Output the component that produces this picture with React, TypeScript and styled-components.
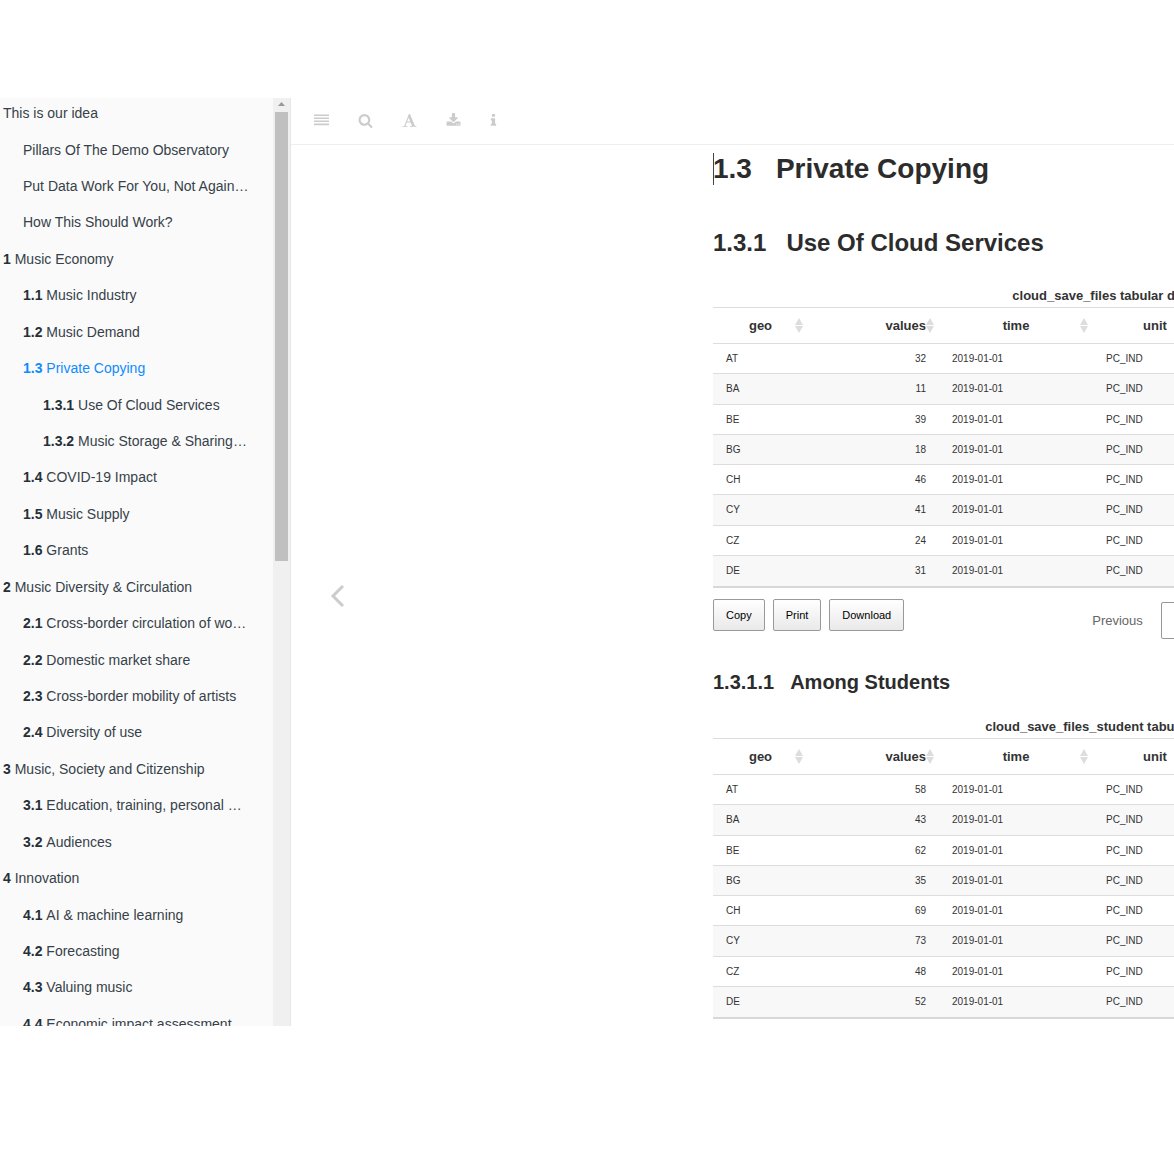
import React from "react";
import styled, { createGlobalStyle } from "styled-components";

const GlobalStyle = createGlobalStyle`
  *, *::before, *::after { box-sizing: border-box; }
  body {
    margin: 0;
    background: #fff;
    color: #333;
    font-family: "Liberation Sans", Arial, sans-serif;
  }
  button { font-family: inherit; }
`;

const Page = styled.div`
  height: 100vh;
  padding: 98px 0 148px;
  overflow: hidden;
`;

const Book = styled.div`
  display: flex;
  height: 100%;
  overflow: hidden;
`;

const Sidebar = styled.aside`
  display: flex;
  flex: 0 0 291px;
  border-right: 1px solid #e7e7e7;
  background: #fafafa;
`;

const Summary = styled.nav`
  flex: 1;
  min-width: 0;
  overflow: hidden;
`;

const ChapterList = styled.ul`
  display: grid;
  grid-auto-rows: 1fr;
  height: 947px;
  margin: -3px 0 0;
  padding: 0;
  list-style: none;
`;

const Chapter = styled.li<{ $level: number }>`
  display: flex;
  align-items: center;
  padding-left: ${({ $level }) => 3 + $level * 20}px;
`;

const ChapterLink = styled.a<{ $active?: boolean }>`
  color: ${({ $active }) => ($active ? "#0f8bff" : "#364149")};
  font-size: 14px;
  line-height: 18px;
  text-decoration: none;
  white-space: nowrap;

  b { color: ${({ $active }) => ($active ? "#0f8bff" : "#263038")}; }
`;

const ScrollTrack = styled.div`
  display: flex;
  flex-direction: column;
  align-items: center;
  flex: 0 0 17px;
  background: #f0f0f0;
`;

const ScrollArrow = styled.svg`
  flex: none;
  width: 9px;
  height: 14px;
`;

const ScrollThumb = styled.div`
  width: 13px;
  height: 449px;
  background: #c0c0c0;
`;

const Body = styled.main`
  display: flex;
  flex-direction: column;
  flex: 1;
  min-width: 0;
`;

const Header = styled.header`
  display: flex;
  flex: none;
  height: 47px;
  padding: 0 0 2px 8px;
  border-bottom: 1px solid #eee;
`;

const ToolButton = styled.button<{ $narrow?: boolean }>`
  display: flex;
  align-items: center;
  justify-content: center;
  width: ${({ $narrow }) => ($narrow ? 36 : 44)}px;
  padding: 0;
  border: 0;
  background: none;
  color: #ccc;

  svg { width: 15px; height: 15px; fill: currentColor; }
`;

const Content = styled.div`
  display: flex;
  flex: 1;
  min-height: 0;
  overflow: hidden;
`;

const PreviousChapter = styled.a`
  display: flex;
  align-items: center;
  justify-content: center;
  flex: 0 0 92px;
  padding-top: 20px;
  color: #ccc;

  svg { width: 14px; height: 24px; }
`;

const Article = styled.article`
  flex: 0 0 780px;
  margin-left: 330px;
  padding-top: 6px;
  color: #333;
`;

const Title = styled.h1`
  position: relative;
  display: flex;
  gap: 24px;
  margin: 0;
  color: #2c2c2c;
  font-size: 28px;
  line-height: 36px;

  &::before {
    content: "";
    position: absolute;
    top: 2px;
    left: 0;
    width: 1px;
    height: 32px;
    background: #444;
  }
`;

const Section = styled.h2`
  display: flex;
  gap: 20px;
  margin: 40px 0 28px;
  color: #2c2c2c;
  font-size: 24px;
  line-height: 32px;
`;

const Subsection = styled.h3`
  display: flex;
  gap: 16px;
  margin: 29px 0 22px;
  color: #2c2c2c;
  font-size: 20px;
  line-height: 28px;
`;

const Figure = styled.figure`
  margin: 0;
`;

const Caption = styled.figcaption`
  margin-bottom: 2px;
  font-size: 13px;
  font-weight: bold;
  line-height: 18px;
  text-align: center;
`;

const DataTable = styled.table`
  width: 504px;
  height: 281px;
  table-layout: fixed;
  border-spacing: 0;
  border-top: 1px solid #ddd;
`;

const HeadCell = styled.th<{ $width: number; $right?: boolean }>`
  position: relative;
  width: ${({ $width }) => $width}px;
  height: 36px;
  padding: ${({ $right }) => ($right ? "0 13px" : "0 18px")};
  border-bottom: 1px solid #ddd;
  font-size: 13px;
  line-height: 18px;
  text-align: ${({ $right }) => ($right ? "right" : "center")};
`;

const SortMark = styled.svg`
  position: absolute;
  top: 10px;
  right: 5px;
  width: 8px;
  height: 15px;
  fill: #ddd;
`;

const Row = styled.tr`
  &:nth-child(even) { background: #f8f8f8; }
  &:last-child td { border-bottom: 2px solid #d8d8d8; }
`;

const Cell = styled.td<{ $right?: boolean }>`
  padding: 1px 13px 0;
  border-bottom: 1px solid #ddd;
  font-size: 10px;
  line-height: 14px;
  text-align: ${({ $right }) => ($right ? "right" : "left")};
`;

const TableFooter = styled.div`
  display: flex;
  gap: 8px;
  height: 40px;
  margin-top: 11px;
`;

const ExportButton = styled.button`
  height: 32px;
  padding: 0 12px;
  border: 1px solid #999;
  border-radius: 2px;
  background: linear-gradient(#fff, #e9e9e9);
  color: #000;
  font-size: 11px;
`;

const Pager = styled.div`
  display: flex;
  align-items: center;
  gap: 18px;
  margin-left: 180px;
  padding-top: 2px;
`;

const PagerButton = styled.button`
  padding: 0;
  border: 0;
  background: none;
  color: #666;
  font-size: 13px;
`;

const CurrentPage = styled.button`
  width: 40px;
  height: 37px;
  border: 1px solid #979797;
  border-radius: 2px;
  background: #fff;
  color: #333;
`;

const chapters: [number, string, string][] = [
  [0, "", "This is our idea"],
  [1, "", "Pillars Of The Demo Observatory"],
  [1, "", "Put Data Work For You, Not Again…"],
  [1, "", "How This Should Work?"],
  [0, "1", "Music Economy"],
  [1, "1.1", "Music Industry"],
  [1, "1.2", "Music Demand"],
  [1, "1.3", "Private Copying"],
  [2, "1.3.1", "Use Of Cloud Services"],
  [2, "1.3.2", "Music Storage & Sharing…"],
  [1, "1.4", "COVID-19 Impact"],
  [1, "1.5", "Music Supply"],
  [1, "1.6", "Grants"],
  [0, "2", "Music Diversity & Circulation"],
  [1, "2.1", "Cross-border circulation of wo…"],
  [1, "2.2", "Domestic market share"],
  [1, "2.3", "Cross-border mobility of artists"],
  [1, "2.4", "Diversity of use"],
  [0, "3", "Music, Society and Citizenship"],
  [1, "3.1", "Education, training, personal …"],
  [1, "3.2", "Audiences"],
  [0, "4", "Innovation"],
  [1, "4.1", "AI & machine learning"],
  [1, "4.2", "Forecasting"],
  [1, "4.3", "Valuing music"],
  [1, "4.4", "Economic impact assessment"],
];

const tools = [
  {
    label: "Toggle sidebar",
    path: "M0 180h1792v190h-1792zM0 540h1792v190h-1792zM0 900h1792v190h-1792zM0 1260h1792v190h-1792z",
  },
  {
    label: "Search",
    path: "M1216 832q0-185-131.5-316.5t-316.5-131.5-316.5 131.5-131.5 316.5 131.5 316.5 316.5 131.5 316.5-131.5 131.5-316.5zm512 832q0 52-38 90t-90 38q-54 0-90-38l-343-342q-179 124-399 124-143 0-273.5-55.5t-225-150-150-225-55.5-273.5 55.5-273.5 150-225 225-150 273.5-55.5 273.5 55.5 225 150 150 225 55.5 273.5q0 220-124 399l343 343q37 37 37 90z",
  },
  {
    label: "Font settings",
    path: "M789 559l-170 450q33 0 136.5 2t160.5 2q19 0 57-2-87-253-184-452zm-725 1105l2-79q23-7 56-12.5t57-10.5 49.5-14.5 44.5-29 31-50.5l237-616 280-724h128q8 14 11 21l205 480q33 78 106 257.5t114 274.5q15 34 58 144.5t72 168.5q20 45 35 57 19 15 88 29.5t84 20.5q6 38 6 57 0 5-.5 13.5t-.5 12.5q-63 0-190-8t-191-8q-76 0-215 7t-178 8q0-43 4-78l131-28q1 0 12.5-2.5t15.5-3.5 14.5-4.5 15-6.5 11-8 9-11 2.5-14q0-16-31-96.5t-72-177.5-42-100l-450-2q-26 58-76.5 195.5t-50.5 162.5q0 22 14 37.5t43.5 24.5 48.5 13.5 57 8.5 41 4q1 19 1 58 0 9-2 27-58 0-174.5-10t-174.5-10q-8 0-26.5 4t-21.5 4q-80 14-188 14z",
  },
  {
    label: "Download book",
    path: "M1344 1344q0-26-19-45t-45-19-45 19-19 45 19 45 45 19 45-19 19-45zm256 0q0-26-19-45t-45-19-45 19-19 45 19 45 45 19 45-19 19-45zm128-224v320q0 40-28 68t-68 28h-1472q-40 0-68-28t-28-68v-320q0-40 28-68t68-28h465l135 136q58 56 136 56t136-56l136-136h464q40 0 68 28t28 68zm-325-569q17 41-14 70l-448 448q-18 19-45 19t-45-19l-448-448q-31-29-14-70 17-39 59-39h256v-448q0-26 19-45t45-19h256q26 0 45 19t19 45v448h256q42 0 59 39z",
  },
  {
    label: "Information",
    narrow: true,
    path: "M1216 1344v128q0 26-19 45t-45 19h-512q-26 0-45-19t-19-45v-128q0-26 19-45t45-19h64v-384h-64q-26 0-45-19t-19-45v-128q0-26 19-45t45-19h384q26 0 45 19t19 45v576h64q26 0 45 19t19 45zm-128-1152v192q0 26-19 45t-45 19h-256q-26 0-45-19t-19-45v-192q0-26 19-45t45-19h256q26 0 45 19t19 45z",
  },
];

const countries = ["AT", "BA", "BE", "BG", "CH", "CY", "CZ", "DE"];

const columns = [
  { name: "geo", width: 95 },
  { name: "values", width: 131, right: true },
  { name: "time", width: 154 },
  { name: "unit", width: 124 },
];

function Dataset({ caption, values }: { caption: string; values: number[] }) {
  return (
    <Figure>
      <Caption>{caption}</Caption>
      <DataTable aria-label={caption}>
        <thead>
          <tr>
            {columns.map((c) => (
              <HeadCell key={c.name} scope="col" $width={c.width} $right={c.right}>
                {c.name}
                <SortMark viewBox="0 0 8 15" aria-hidden="true">
                  <path d="M4 0L8 7H0zM0 8h8l-4 7z" />
                </SortMark>
              </HeadCell>
            ))}
          </tr>
        </thead>
        <tbody>
          {countries.map((geo, i) => (
            <Row key={geo}>
              <Cell>{geo}</Cell>
              <Cell $right>{values[i]}</Cell>
              <Cell>2019-01-01</Cell>
              <Cell>PC_IND</Cell>
            </Row>
          ))}
        </tbody>
      </DataTable>
    </Figure>
  );
}

export default function App() {
  return (
    <>
      <GlobalStyle />
      <Page>
        <Book>
          <Sidebar>
            <Summary aria-label="Chapters">
              <ChapterList>
                {chapters.map(([level, number, title]) => (
                  <Chapter key={title} $level={level}>
                    <ChapterLink href="#" $active={number === "1.3"}>
                      {number && <b>{number} </b>}
                      {title}
                    </ChapterLink>
                  </Chapter>
                ))}
              </ChapterList>
            </Summary>
            <ScrollTrack aria-hidden="true">
              <ScrollArrow viewBox="0 0 9 14">
                <path d="M1 8l3.5-4L8 8z" fill="#999" />
              </ScrollArrow>
              <ScrollThumb />
            </ScrollTrack>
          </Sidebar>
          <Body>
            <Header>
              {tools.map((t) => (
                <ToolButton key={t.label} type="button" aria-label={t.label} $narrow={t.narrow}>
                  <svg viewBox="0 0 1792 1792" aria-hidden="true">
                    <path d={t.path} />
                  </svg>
                </ToolButton>
              ))}
            </Header>
            <Content>
              <PreviousChapter href="#" aria-label="Previous chapter">
                <svg viewBox="0 0 14 24" fill="none" stroke="currentColor" strokeWidth="3" aria-hidden="true">
                  <path d="M13 2L3 12l10 10" />
                </svg>
              </PreviousChapter>
              <Article>
                <Title>
                  <span>1.3</span>
                  <span>Private Copying</span>
                </Title>
                <Section>
                  <span>1.3.1</span>
                  <span>Use Of Cloud Services</span>
                </Section>
                <Dataset
                  caption="cloud_save_files tabular data"
                  values={[32, 11, 39, 18, 46, 41, 24, 31]}
                />
                <TableFooter>
                  <ExportButton type="button">Copy</ExportButton>
                  <ExportButton type="button">Print</ExportButton>
                  <ExportButton type="button">Download</ExportButton>
                  <Pager>
                    <PagerButton type="button">Previous</PagerButton>
                    <CurrentPage type="button">1</CurrentPage>
                  </Pager>
                </TableFooter>
                <Subsection>
                  <span>1.3.1.1</span>
                  <span>Among Students</span>
                </Subsection>
                <Dataset
                  caption="cloud_save_files_student tabular data"
                  values={[58, 43, 62, 35, 69, 73, 48, 52]}
                />
              </Article>
            </Content>
          </Body>
        </Book>
      </Page>
    </>
  );
}
